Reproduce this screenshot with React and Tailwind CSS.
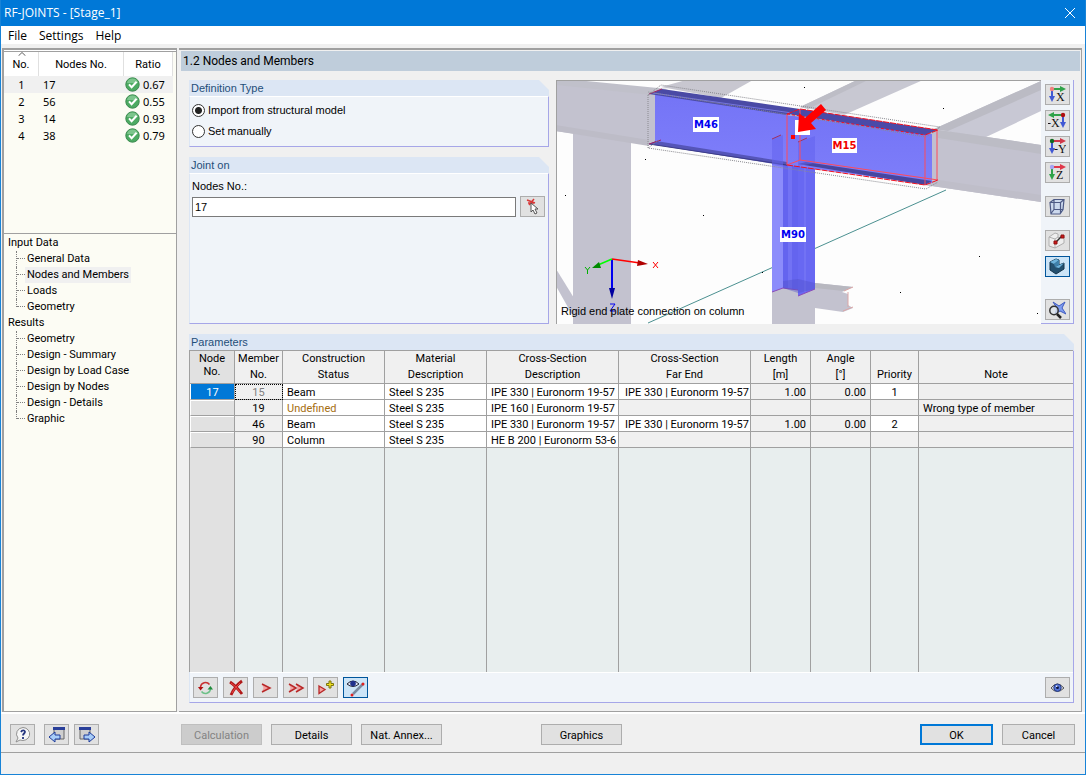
import { useState } from 'react'
import { clsx } from 'clsx'

const joints = [
  { no: 1, node: '17', ratio: '0.67' },
  { no: 2, node: '56', ratio: '0.55' },
  { no: 3, node: '14', ratio: '0.93' },
  { no: 4, node: '38', ratio: '0.79' },
]

const tree = [
  { title: 'Input Data', items: ['General Data', 'Nodes and Members', 'Loads', 'Geometry'] },
  {
    title: 'Results',
    items: ['Geometry', 'Design - Summary', 'Design by Load Case', 'Design by Nodes', 'Design - Details', 'Graphic'],
  },
]

const columns = [
  ['Member', 'No.'],
  ['Construction', 'Status'],
  ['Material', 'Description'],
  ['Cross-Section', 'Description'],
  ['Cross-Section', 'Far End'],
  ['Length', '[m]'],
  ['Angle', '[°]'],
  ['', 'Priority'],
  ['', 'Note'],
]

const members = [
  { node: '17', no: '15', status: 'Beam', section: 'IPE 330 | Euronorm 19-57', far: 'IPE 330 | Euronorm 19-57', length: '1.00', angle: '0.00', priority: '1' },
  { no: '19', status: 'Undefined', section: 'IPE 160 | Euronorm 19-57', note: 'Wrong type of member' },
  { no: '46', status: 'Beam', section: 'IPE 330 | Euronorm 19-57', far: 'IPE 330 | Euronorm 19-57', length: '1.00', angle: '0.00', priority: '2' },
  { no: '90', status: 'Column', section: 'HE B 200 | Euronorm 53-6' },
]

const bar = 'border-[#a0a0a0]'

function IconButton({ label, active, children }) {
  return (
    <button
      type="button"
      aria-label={label}
      className={clsx(
        'flex h-[21px] w-[25px] shrink-0 items-center justify-center border',
        active ? 'border-[#00559b] bg-[#cce4f7]' : 'border-[#adadad] bg-[#e1e1e1]'
      )}
    >
      <svg viewBox="0 0 18 18" className="size-[18px]" fill="none" aria-hidden="true">
        {children}
      </svg>
    </button>
  )
}

function PushButton({ children, disabled, primary, className }) {
  return (
    <button
      type="button"
      disabled={disabled}
      className={clsx(
        'h-[21px] pt-px text-center leading-none',
        disabled && 'border border-[#bfbfbf] bg-[#cccccc] text-[#838383]',
        primary && 'border-2 border-[#0078d7] bg-[#e1e1e1]',
        !disabled && !primary && 'border border-[#adadad] bg-[#e1e1e1]',
        className
      )}
    >
      {children}
    </button>
  )
}

function GroupBox({ title, className, children }) {
  return (
    <section className={clsx('flex flex-col', className)}>
      <h2 className="h-4 shrink-0 bg-[#dce6f4] pl-[2px] font-['Liberation_Sans',sans-serif] text-[11px] leading-[17px] text-[#1f4e79] [clip-path:polygon(0_0,calc(100%-10px)_0,100%_10px,100%_100%,0_100%)]">
        {title}
      </h2>
      <div className="flex min-h-0 flex-1 flex-col border border-t-white border-r-[#a6a6e8] border-b-[#a6a6e8] border-l-[#dce6f4] bg-[#f0f4f9]">
        {children}
      </div>
    </section>
  )
}

function CheckBadge() {
  return (
    <svg viewBox="0 0 15 15" className="size-[15px] shrink-0" aria-hidden="true">
      <circle cx="7.5" cy="7.5" r="6.7" fill="#4caa62" stroke="#3c8a50" />
      <path d="M2 6a5.6 5.6 0 0 1 11 0z" fill="#7cc58c" />
      <path d="M4 7.4l2.6 2.8 5-5.4" fill="none" stroke="#fff" strokeWidth="2" />
    </svg>
  )
}

function JointList() {
  return (
    <div className="h-[178px] shrink-0 border-t border-[#a0a0a0] pr-[3px]">
      <table className="w-full table-fixed border-separate border-spacing-0 font-['Noto_Sans',sans-serif]">
        <thead>
          <tr className="h-6 bg-white font-[Roboto,sans-serif]">
            <th className="relative w-[35px] border-r border-[#e0e0e0] p-0 pt-[2px] font-normal">
              <svg viewBox="0 0 8 4" className="absolute top-0 left-[14px] h-1 w-2" aria-hidden="true">
                <path d="M0.5 3.8L4 0.5l3.5 3.3" fill="none" stroke="#606060" />
              </svg>
              No.
            </th>
            <th className="border-r border-[#e0e0e0] p-0 pt-[2px] font-normal">Nodes No.</th>
            <th className="w-[49px] border-r border-[#e0e0e0] p-0 pt-[2px] font-normal">Ratio</th>
          </tr>
        </thead>
        <tbody>
          {joints.map((j, i) => (
            <tr key={j.no} className={clsx('h-[17px] leading-[17px]', i === 0 && 'bg-[#f0f0f0]')}>
              <td className="p-0 text-center">{j.no}</td>
              <td className="p-0 pl-1">{j.node}</td>
              <td className="p-0 pl-px">
                <span className="flex items-center gap-[3px]">
                  <CheckBadge />
                  {j.ratio}
                </span>
              </td>
            </tr>
          ))}
        </tbody>
      </table>
    </div>
  )
}

function Navigator() {
  const [current, setCurrent] = useState('Nodes and Members')
  return (
    <nav className="flex-1 border-t border-[#a0a0a0] pt-px pl-1">
      {tree.map((group) => (
        <div key={group.title}>
          <div className="h-4 leading-4">{group.title}</div>
          <ul className="pl-2">
            {group.items.map((item, i) => (
              <li key={item} className="flex h-4 items-start">
                <span
                  className={clsx(
                    'w-0 border-l border-dotted border-[#808080]',
                    i === group.items.length - 1 ? 'h-2' : 'h-4'
                  )}
                />
                <span className="h-2 w-2 border-b border-dotted border-[#808080]" />
                <button
                  type="button"
                  onClick={() => setCurrent(item)}
                  className={clsx('h-4 px-[2px] leading-4', current === item && 'bg-[#f0f0f0]')}
                >
                  {item}
                </button>
              </li>
            ))}
          </ul>
        </div>
      ))}
    </nav>
  )
}

function SceneLabel({ x, y, width, color, children }) {
  return (
    <g>
      <rect x={x} y={y} width={width} height="15" fill="#fff" />
      <text x={x + width / 2} y={y + 11} textAnchor="middle" fill={color} fontSize="10" fontWeight="700" fontFamily="'DejaVu Sans', sans-serif">
        {children}
      </text>
    </g>
  )
}

function Scene() {
  const dots = [[89, 79], [9, 115], [147, 135], [206, 192], [248, 7], [387, 28], [423, 176], [344, 212], [481, 233]]
  return (
    <svg
      viewBox="1 1 484 243"
      preserveAspectRatio="xMinYMin slice"
      role="img"
      aria-label="Joint model"
      className="h-full min-w-0 flex-1 border-t border-l border-[#a0a0a0] bg-[#fdfdfd] font-['Liberation_Sans',sans-serif]"
    >
      <defs>
        <linearGradient id="web" x1="0" y1="0" x2="0" y2="1">
          <stop offset="0" stopColor="#7474f6" />
          <stop offset="1" stopColor="#7e7efa" />
        </linearGradient>
      </defs>

      {/* surrounding frame */}
      <g fill="#c3c2cf">
        <path d="M17 45H75V244H17z" />
        <path d="M0 189L18 218V238L0 206z" />
        <path d="M105 7L130 0H197L165 18z" fill="#c8c7d0" />
        <path d="M0 2L105 14V66L0 51z" />
        <path d="M0 0H20L112 9L95 15L0 5z" fill="#c0c0ca" />
        <path d="M0 45L93 60V66L0 51z" fill="#bdbcc7" />
        <path d="M244 27L301 0H367L288 35z" fill="#c8c8d2" />
        <path d="M244 27L301 0H312L252 29z" fill="#bdbdc6" />
        <path d="M378 49L485 1V31L428 58z" fill="#c8c8d4" />
        <path d="M378 49L485 1V10L392 51z" fill="#bbbbc4" />
        <path d="M376 49L485 65V122L369 105z" />
        <path d="M376 49L485 65V74L376 57z" fill="#bcbcc5" />
        <path d="M369 98L485 115V122L369 105z" fill="#bfbec9" />
        <path d="M216 207H259V244H216z" />
        <path d="M259 203L297 207L286 212L292 214L292 225L297 228L287 232L259 228z" />
        <path d="M259 203L297 207L287 211L259 208z" fill="#b8b8c0" />
      </g>
      <path d="M297 207L288 211M292 212V227M297 227L287 231" stroke="#dba6a6" fill="none" />
      <path d="M92 243L390 110" stroke="#4b9090" />

      {/* column M90 */}
      <path d="M216 59L227 55V208L216 212z" fill="#8c8cfb" />
      <path d="M227 58H242V210L227 208z" fill="#6464ef" />
      <path d="M242 62L259 56V209L242 216z" fill="#6868f2" />
      <path d="M232 60H236V209H232zM248 60H250V212H248z" fill="#7272f4" />
      <path d="M216 212L227 208L242 210M242 216L259 209" stroke="#8b4bb8" fill="none" />
      <path d="M227 201L242 199L259 203V209L242 213L227 208z" fill="#5050c8" opacity=".4" />

      {/* beam M46 */}
      <path d="M99 14L231 34V84L99 62z" fill="url(#web)" />
      <path d="M93 14L106 9L244 29L231 35z" fill="#4a4aa5" />
      <path d="M97 13L236 33" stroke="#7676dd" />
      <path d="M93 64L100 61L231 82V86z" fill="#5555b8" />
      <path d="M93 64L231 85" stroke="#3d3d88" />
      <path d="M93 14L106 9M93 64L105 60" stroke="#a02060" />

      {/* beam M15 */}
      <path d="M231 35L376 54V103L369 104L231 85z" fill="url(#web)" />
      <path d="M376 54L382 51V99L376 103z" fill="#c0bfd0" />
      <path d="M231 34L244 29L382 50L369 55z" fill="#4a4aa8" />
      <path d="M242 84L250 82L376 101L369 105z" fill="#4646a0" />
      <path d="M216 59L227 55V87L216 85zM242 62L259 56V83L242 86z" fill="#6262ee" opacity=".55" />
      <path d="M216 59L225 55M242 62L251 58" stroke="#a03060" />

      <g fill="none" stroke="#8a8a90" strokeDasharray="1 1">
        <path d="M92 15L105 5L384 47L370 57L92 12M92 15V68L370 109L382 102M92 68L103 60" />
      </g>
      <g fill="none" stroke="#ff4a5a">
        <path d="M231 34V85M244 29V80L231 85M369 55V105M381 50V100M244 80L382 100" />
        <path d="M231 34L244 29L382 50L369 55M231 85L369 105L382 100" stroke="#f01020" strokeDasharray="6 1" />
        <path d="M231 34L369 55" stroke="#f01020" strokeDasharray="3 2" />
      </g>

      <SceneLabel x={137} y={37} width={26} color="#0000f0">M46</SceneLabel>
      <SceneLabel x={276} y={58} width={25} color="#f00000">M15</SceneLabel>
      <SceneLabel x={224} y={147} width={26} color="#0000f0">M90</SceneLabel>
      <path d="M239 40H254V55H239z" fill="#fff" />
      <path d="M235 55h4v4h-4z" fill="#f00" />
      <path d="M242 52L243 33L249 38L265 24L270 30L255 43L260 49z" fill="#f00" />

      {/* axes */}
      <path d="M56 179V210" stroke="#0000f0" strokeWidth="2" />
      <path d="M53 208h6l-3 11z" fill="#0000a0" />
      <path d="M56 179L84 183" stroke="#f00" strokeWidth="1.5" />
      <path d="M82 180L92 184L81 186z" fill="#b00000" />
      <path d="M56 179L42 185" stroke="#0f0" strokeWidth="1.5" />
      <path d="M43 182L36 188L45 188z" fill="#008a00" />
      <path d="M97 182l5 6M102 182l-5 6" stroke="#f00" />
      <path d="M29 187l2.5 3 2.5-3M31.5 190v4" stroke="#00b000" fill="none" />
      <path d="M54 224h5l-5 7h5" stroke="#0000f0" fill="none" />

      {dots.map(([x, y]) => (
        <rect key={x} x={x} y={y} width="1" height="1" fill="#000" />
      ))}
      <text x="5" y="235" fontSize="11">Rigid end plate connection on column</text>
    </svg>
  )
}

function AxisIcon({ letter, h, v, dot, left }) {
  const x = left ? 15 : 4
  return (
    <>
      <path d={left ? 'M14 3H5' : 'M4 3h9'} stroke={h} strokeWidth="2" />
      <path d={left ? 'M6 0v6L0 3z' : 'M12 0v6l6-3z'} fill={h} />
      <path d={`M${x} 3v8`} stroke={v} strokeWidth="2" />
      <path d={`M${x - 3} 10h6l-3 6z`} fill={v} />
      <circle cx={x} cy="3" r="2.2" fill={dot} />
      <text x={left ? -1 : letter.length > 1 ? 6 : 8} y="15" fontSize="12" fontFamily="'Liberation Serif', serif" fill="#111">
        {letter}
      </text>
    </>
  )
}

function ViewToolbar() {
  return (
    <div className="flex w-[33px] shrink-0 flex-col items-center border-r border-b border-[#a6a6e8] bg-[#f0f4f9] pt-1 pb-[3px]">
      <div className="flex flex-col gap-[5px]">
        <IconButton label="View in X"><AxisIcon letter="X" h="#2fa34a" v="#4058d4" dot="#f08080" /></IconButton>
        <IconButton label="View against X"><AxisIcon letter="-X" h="#2fa34a" v="#4058d4" dot="#b01010" left /></IconButton>
        <IconButton label="View against Y"><AxisIcon letter="-Y" h="#d0384a" v="#4058d4" dot="#126a22" /></IconButton>
        <IconButton label="View in Z"><AxisIcon letter="Z" h="#e0384a" v="#2fa34a" dot="#a4a4f4" /></IconButton>
      </div>
      <div className="mt-[13px] flex flex-col gap-[13px]">
        <IconButton label="Isometric view">
          <path d="M2 4l3-3h11v11l-3 4H2z" fill="#ccd9ee" />
          <path d="M2 4.500l4-3h10l-1 10-3 4.500H3zM2 4.500h10.500v11M12.500 4.500l3.500-3M6 1.500v10h9M6 11.500l-3 4" stroke="#4d5a85" strokeWidth="1.2" />
        </IconButton>
        <div className="flex flex-col gap-[5px]">
          <IconButton label="Transparent model">
            <path d="M1 5l6-4 3 1v4l6-2v7l-9 5-6-2zM1 5l6 2v9M7 7l3-2" stroke="#b0b0b0" fill="#eee" />
            <path d="M7 11l7-7" stroke="#333" strokeWidth="1.5" />
            <path d="M6 9h3v3H6zM13 3h3v3h-3z" fill="#d01818" stroke="#8c1010" />
          </IconButton>
          <IconButton label="Solid model" active>
            <path d="M2 4l6-3 3 1v5l5-2v6l-8 5-6-4z" fill="#24506f" stroke="#14344c" />
            <path d="M2 4l6-3 3 1-5 4zM7 9l4-2 5-2-5 5z" fill="#6fb4dc" />
            <path d="M6 6l5-4v5l-4 2z" fill="#3f81ab" />
          </IconButton>
        </div>
      </div>
      <div className="mt-auto">
        <IconButton label="Reset view">
          <path d="M5 1l6 4 6-4-3 6 4 6-6-3-5 3 2-6z" fill="#7f9df0" stroke="#3f5ac0" />
          <circle cx="6" cy="9.5" r="4.2" fill="#dfe6ee" fillOpacity=".8" stroke="#333" strokeWidth="1.5" />
          <path d="M9 13l4 4" stroke="#222" strokeWidth="2.5" />
        </IconButton>
      </div>
    </div>
  )
}

function Eye() {
  return (
    <>
      <path d="M2 9Q8 1 15 9Q8 16 2 9z" fill="#d5d9e6" stroke="#555" />
      <circle cx="8.5" cy="8.7" r="3.7" fill="#5474d8" stroke="#263a80" />
      <circle cx="8.5" cy="8.7" r="1.4" fill="#0b123a" />
      <circle cx="7.7" cy="7.2" r=".8" fill="#fff" />
    </>
  )
}

function Cell({ className, children }) {
  return <td className={clsx('overflow-hidden border-r border-b p-0 pt-[2px] whitespace-nowrap', bar, className)}>{children}</td>
}

function MemberTable() {
  return (
    <table className="h-full w-full table-fixed border-separate border-spacing-0 border-t border-l border-[#a0a0a0] font-[Roboto,sans-serif] text-[11px] leading-[13px]">
      <colgroup>
        <col className="w-[45px]" />
        <col className="w-[48px]" />
        <col className="w-[102px]" />
        <col className="w-[102px]" />
        <col className="w-[132px]" />
        <col className="w-[132px]" />
        <col className="w-[60px]" />
        <col className="w-[60px]" />
        <col className="w-[48px]" />
        <col />
      </colgroup>
      <thead>
        <tr className="h-[33px]">
          <th className="border-r border-b border-[#a0a0a0] bg-[#e1e1e1] p-0 pb-1 leading-[13px] font-normal">
            Node<br />No.
          </th>
          {columns.map(([top, bottom], i) => (
            <th key={i} className={clsx('border-b bg-[#f0f0f0] p-0 leading-4 font-normal', bar, i < 8 && 'border-r')}>
              {top || '\u00a0'}<br />{bottom}
            </th>
          ))}
        </tr>
      </thead>
      <tbody>
        {members.map((m) => (
          <tr key={m.no} className="h-4">
            <Cell className={clsx('border-l border-l-white text-center', m.node ? 'bg-[#0078d7] text-white' : 'bg-[#e1e1e1] shadow-[inset_0_1px_0_white]')}>
              {m.node}
            </Cell>
            <Cell className={clsx('bg-[#f0f0f0] text-center', m.node && 'text-[#808080] outline-1 -outline-offset-1 outline-dotted outline-black')}>{m.no}</Cell>
            <Cell className={clsx('bg-white pl-1', m.status === 'Undefined' && 'text-[#a56e0f]')}>{m.status}</Cell>
            <Cell className="bg-white pl-1">Steel S 235</Cell>
            <Cell className="bg-white pl-1">{m.section}</Cell>
            <Cell className={clsx('pl-1.5', m.far ? 'bg-white' : 'bg-[#f0f0f0]')}>{m.far}</Cell>
            <Cell className="bg-[#f0f0f0] pr-1 text-right">{m.length}</Cell>
            <Cell className="bg-[#f0f0f0] pr-1 text-right">{m.angle}</Cell>
            <Cell className={clsx('text-center', m.priority ? 'bg-white' : 'bg-[#f0f0f0]')}>{m.priority}</Cell>
            <td className="border-b border-[#a0a0a0] bg-[#f0f0f0] p-0 pt-[2px] pl-1">{m.note}</td>
          </tr>
        ))}
        <tr>
          <td className="border-r border-[#a0a0a0] bg-[#e1e1e1]" />
          {columns.map((c, i) => (
            <td key={i} className={clsx('bg-[#e8eeee]', bar, i < 8 && 'border-r')} />
          ))}
        </tr>
      </tbody>
    </table>
  )
}

function TableToolbar() {
  return (
    <div className="flex items-center gap-[5px] border-t border-white px-[3px] py-1">
      <IconButton label="Refresh">
        <path d="M3.5 8A5 5 0 0 1 12.5 5.5" stroke="#c83030" strokeWidth="1.5" />
        <path d="M1 8h5.5L3.5 11.5z" fill="#b01010" />
        <path d="M13.5 10A5 5 0 0 1 4.500 12.500" stroke="#6cc088" strokeWidth="1.5" />
        <path d="M10.5 10.500h5.500L13.500 7z" fill="#1e8a3c" />
      </IconButton>
      <IconButton label="Delete">
        <path d="M3 3q6 4 12 12M15 2Q8 7 4 16" stroke="#b01818" strokeWidth="2.8" />
        <path d="M4 4q5 3 9 9M13 4Q8 8 5 14" stroke="#ee4444" />
      </IconButton>
      <IconButton label="Next">
        <path d="M5 5l8 4-8 4 1.5-4z" fill="#f4a0a0" />
        <path d="M5 5l8 4-8 4" stroke="#b82828" strokeWidth="1.5" />
      </IconButton>
      <IconButton label="Last">
        <path d="M2 5l7 4-7 4 1.5-4zM9 5l7 4-7 4 1.5-4z" fill="#f4a0a0" />
        <path d="M2 5l7 4-7 4M9 5l7 4-7 4" stroke="#b82828" strokeWidth="1.5" />
      </IconButton>
      <IconButton label="Add">
        <path d="M2 7l6 3.5-6 4z" fill="#f4a0a0" stroke="#b82828" strokeWidth="1.3" />
        <path d="M12 2h2v2.5h2.5v2H14V9h-2V6.5H9.500v-2H12z" fill="#f0e020" stroke="#7b7410" />
      </IconButton>
      <IconButton label="Show in model" active>
        <path d="M0 5Q6 -1 12 5Q6 10 0 5z" fill="#dfe5f5" stroke="#223" />
        <circle cx="6" cy="4.5" r="2.8" fill="#20308c" />
        <path d="M6 15L16 5" stroke="#7a8aa0" strokeWidth="2.5" />
        <circle cx="5" cy="16" r="1.5" fill="#e02020" />
        <circle cx="16" cy="5" r="1.5" fill="#e02020" />
      </IconButton>
      <div className="ml-auto">
        <IconButton label="View mode"><Eye /></IconButton>
      </div>
    </div>
  )
}

function DefinitionType() {
  const [mode, setMode] = useState('import')
  const options = [
    ['import', 'Import from structural model'],
    ['manual', 'Set manually'],
  ]
  return (
    <GroupBox title="Definition Type" className="h-[67px]">
      <div className="flex flex-col gap-1 pt-[5px] pl-[2px]">
        {options.map(([value, label]) => (
          <label key={value} className="flex h-[17px] items-center gap-[3px]">
            <input
              type="radio"
              name="definition"
              checked={mode === value}
              onChange={() => setMode(value)}
              className="size-[13px] appearance-none rounded-full border border-[#333] bg-white checked:bg-[radial-gradient(circle,#222_3px,white_4px)]"
            />
            {label}
          </label>
        ))}
      </div>
    </GroupBox>
  )
}

function JointOn() {
  return (
    <GroupBox title="Joint on" className="flex-1">
      <div className="flex flex-col pt-1 pr-[3px] pl-[2px]">
        <label htmlFor="nodes" className="leading-4">Nodes No.:</label>
        <div className="mt-[2px] flex gap-1">
          <input
            id="nodes"
            defaultValue="17"
            className="mt-px h-5 min-w-0 flex-1 border border-[#7a7a7a] bg-white px-[2px] outline-none"
          />
          <IconButton label="Pick node">
            <path d="M3 2l8 3M10 1L5 7M4 5h6" stroke="#d83838" strokeWidth="1.5" />
            <path d="M7 5v9l2-2 2 4 2-1-2-4h3z" fill="#fff" stroke="#555" />
          </IconButton>
        </div>
      </div>
    </GroupBox>
  )
}

function Footer() {
  return (
    <footer className="flex h-[38px] shrink-0 items-start pt-[10px] pr-[10px] pl-[9px]">
      <div className="flex w-[171px] shrink-0">
        <IconButton label="Help">
          <path d="M9 1.5a7 6.5 0 1 1-3 12.5l-4 2 2-4A7 6.5 0 0 1 9 1.5z" fill="#f6f6f6" stroke="#909090" />
          <path d="M7 6q1-2 3-1.5q2 1 0 3q-1 1-1 2M9 11v2" stroke="#24357f" strokeWidth="1.8" />
        </IconButton>
        <div className="ml-[9px] flex gap-[5px]">
          <IconButton label="Previous">
            <path d="M6 2h10v11H6z" fill="#cfcfcf" stroke="#666" />
            <path d="M5 1h12v3H5z" fill="#2a3f9a" />
            <path d="M1 11l6-5v3h5v4H7v3z" fill="#a8cdf8" stroke="#1d3a9a" />
          </IconButton>
          <IconButton label="Next page">
            <path d="M2 2h10v11H2z" fill="#cfcfcf" stroke="#666" />
            <path d="M1 1h12v3H1z" fill="#2a3f9a" />
            <path d="M17 11l-6-5v3H6v4h5v3z" fill="#a8cdf8" stroke="#1d3a9a" />
          </IconButton>
        </div>
      </div>
      <div className="flex gap-[9px]">
        <PushButton disabled className="w-[81px]">Calculation</PushButton>
        <PushButton className="w-[81px]">Details</PushButton>
        <PushButton className="w-[81px]">Nat. Annex...</PushButton>
      </div>
      <PushButton className="ml-[99px] w-[81px]">Graphics</PushButton>
      <div className="ml-auto flex gap-[9px]">
        <PushButton primary className="w-[73px]">OK</PushButton>
        <PushButton className="w-[73px]">Cancel</PushButton>
      </div>
    </footer>
  )
}

export default function App() {
  return (
    <div className="flex h-screen min-h-[600px] flex-col border border-t-0 border-[#1883d7] bg-[#f0f0f0] font-[Roboto,sans-serif] text-[11px] text-black">
      <header className="flex h-[26px] shrink-0 items-center justify-between bg-[#0078d7] pr-[10px] pl-[3px] font-['Open_Sans',sans-serif] text-white">
        <h1 className="text-[12px]">RF-JOINTS - [Stage_1]</h1>
        <button type="button" aria-label="Close">
          <svg viewBox="0 0 10 10" className="size-[10px]" aria-hidden="true">
            <path d="M0 0l10 10M10 0L0 10" stroke="#fff" />
          </svg>
        </button>
      </header>
      <div className="flex h-[18px] shrink-0 items-center gap-3 bg-white pt-[2px] pl-[7px] font-['Open_Sans',sans-serif] text-[12px]">
        <button type="button">File</button>
        <button type="button">Settings</button>
        <button type="button">Help</button>
      </div>

      <div className="mt-1 flex min-h-0 flex-1 gap-[2px] border-b-2 border-white">
        <aside className="ml-[1px] flex w-[175px] shrink-0 flex-col border-2 border-r border-b border-[#a0a0a0] bg-[#f0f0f0]">
          <div className="flex min-h-0 flex-1 flex-col gap-1 border-t border-white bg-[#fcfcf4]">
            <JointList />
            <Navigator />
          </div>
        </aside>

        <main className="mr-[3px] flex min-w-0 flex-1 flex-col border-t-2 border-r border-b border-[#a0a0a0] pr-[1px] pl-[2px]">
          <div className="mt-[1px] h-5 shrink-0 bg-[#bfcddb] pl-[2px] text-[12px] leading-5">
            1.2 Nodes and Members
          </div>
          <div className="flex min-h-0 flex-1 flex-col gap-2.5 pt-[9px] pr-[6px] pb-2 pl-2">
            <div className="flex h-[244px] shrink-0 gap-[7px] font-['Liberation_Sans',sans-serif]">
              <div className="flex w-[360px] shrink-0 flex-col gap-2.5">
                <DefinitionType />
                <JointOn />
              </div>
              <div className="flex min-w-0 flex-1">
                <Scene />
                <ViewToolbar />
              </div>
            </div>
            <GroupBox title="Parameters" className="min-h-0 flex-1">
              <div className="-mt-px -ml-px min-h-0 flex-1">
                <MemberTable />
              </div>
              <TableToolbar />
            </GroupBox>
          </div>
        </main>
      </div>

      <Footer />
      <div className="h-[22px] shrink-0 border-t border-[#a0a0a0]" role="status" />
    </div>
  )
}
